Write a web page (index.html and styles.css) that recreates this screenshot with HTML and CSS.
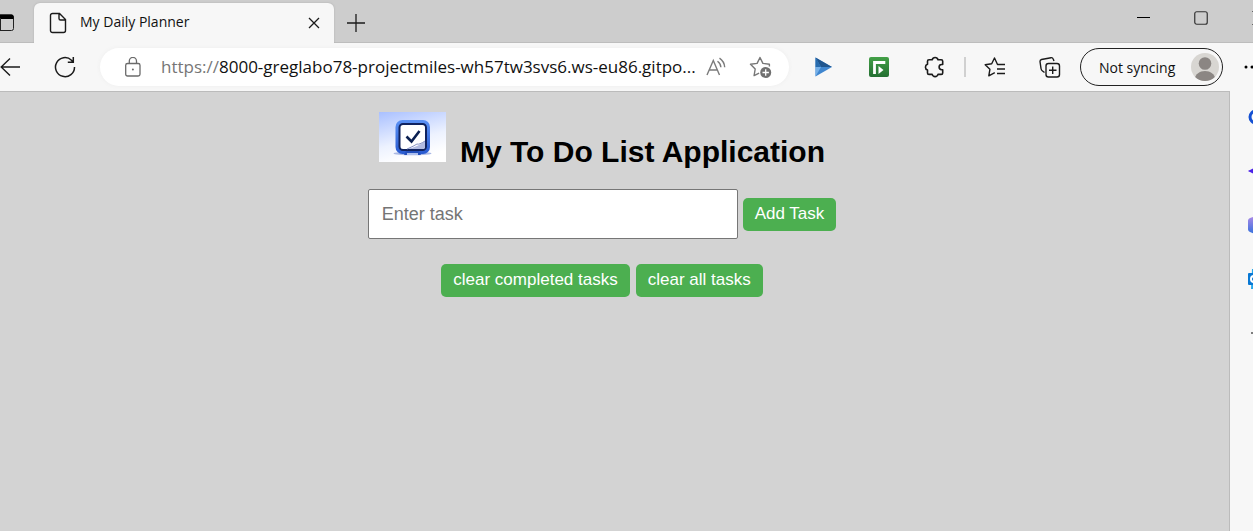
FILE: index.html
```html
<!DOCTYPE html>
<html lang="en">
<head>
<meta charset="utf-8">
<title>My Daily Planner</title>
<link rel="stylesheet" href="styles.css">
</head>
<body>
<header class="tabs">
  <button class="tab-menu" aria-label="Tab actions">
    <svg width="14" height="18" viewBox="0 0 14 18"><rect x="-3.500" y="1" width="17" height="15.500" rx="2" fill="none" stroke="#222"/><path d="M-3 .5h14.500a2 2 0 0 1 2 2V5H-3z" fill="#000"/><path d="M.5 4v12" stroke="#222"/></svg>
  </button>
  <div class="tab">
    <svg width="18" height="22" viewBox="0 0 18 22" fill="none" stroke="#1b1b1b" stroke-width="1.400"><path d="M3.500 1.500h7l6 6v11a2 2 0 0 1-2 2h-11a2 2 0 0 1-2-2v-15a2 2 0 0 1 2-2z M10 1.500v5a1.500 1.500 0 0 0 1.500 1.500h5"/></svg>
    <span class="tab-title">My Daily Planner</span>
    <button class="tab-close" aria-label="Close tab"><svg width="12" height="12" viewBox="0 0 12 12" stroke="#1b1b1b" stroke-width="1.300"><path d="M1 1l10 10M11 1L1 11"/></svg></button>
  </div>
  <button class="new-tab" aria-label="New tab"><svg width="18" height="18" viewBox="0 0 18 18" stroke="#1b1b1b" stroke-width="1.300"><path d="M9 0v18M0 9h18"/></svg></button>
  <div class="window-controls">
    <button aria-label="Minimize"><svg width="14" height="14" viewBox="0 0 14 14"><path d="M1 6.500h13" stroke="#000"/></svg></button>
    <button aria-label="Maximize"><svg width="14" height="14" viewBox="0 0 14 14"><rect x=".75" y=".75" width="12.500" height="12.500" rx="2" fill="none" stroke="#333" stroke-width="1.200"/></svg></button>
    <button aria-label="Close window"><svg width="14" height="14" viewBox="0 0 14 14"><path d="M.5 .5l13 13M13.500 .5l-13 13" stroke="#000"/></svg></button>
  </div>
</header>

<nav class="toolbar">
  <button class="icon back" aria-label="Back"><svg width="22" height="20" viewBox="0 0 22 20" fill="none" stroke="#1b1b1b" stroke-width="1.400"><path d="M20 10H1M10 1.500L1.200 10l8.800 8.500"/></svg></button>
  <button class="icon reload" aria-label="Refresh"><svg width="22" height="22" viewBox="0 0 22 22" fill="none" stroke="#1b1b1b" stroke-width="1.500"><path d="M20.500 11A9.500 9.500 0 1 1 17.500 4.200L19 6M19.300 1v5.300h-5.500"/></svg></button>
  <div class="address">
    <svg class="lock" width="16" height="20" viewBox="0 0 16 20" fill="none" stroke="#6b6b6b" stroke-width="1.300"><rect x=".7" y="6.500" width="14.300" height="12.500" rx="1.800"/><path d="M4.300 6.500V4a3.600 3.600 0 0 1 7.200 0v2.500"/><circle cx="7.900" cy="12.600" r="1" fill="#6b6b6b" stroke="none"/></svg>
    <label class="scheme" for="url">https://</label>
    <input class="url" id="url" type="text" value="8000-greglabo78-projectmiles-wh57tw3svs6.ws-eu86.gitpo...">
    <button class="icon" aria-label="Read aloud"><svg width="22" height="20" viewBox="0 0 22 20" fill="none" stroke="#7b7b7b" stroke-width="1.400"><path d="M1 18L7.300 3.500 13.500 18M3.300 13h8M11.500 4.200a8 8 0 0 1 3.400 6M13.500 1.200a12 12 0 0 1 5.200 9"/></svg></button>
    <button class="icon" aria-label="Add to favorites"><svg width="24" height="24" viewBox="0 0 24 24"><path d="M20.400 11.500v-2.200l-6.500-.9L11 2.500 8.100 8.400l-6.600.9L6.200 14l-1.100 6.600 5-2.500" fill="none" stroke="#777" stroke-width="1.400" stroke-linejoin="round"/><circle cx="16.700" cy="17.500" r="5.500" fill="#707070"/><path d="M16.700 14.300v6.400M13.500 17.500h6.400" stroke="#fff" stroke-width="1.300"/></svg></button>
  </div>
  <div class="extensions">
    <button class="icon" aria-label="Video extension"><svg width="24" height="24" viewBox="0 0 24 24"><path d="M4.500 2.500L21 12 4.500 21.500z" fill="#3f86cf"/><path d="M4.500 2.500L21 12H10z" fill="#1f558e"/><path d="M4.500 2.500L10 12H4.500z" fill="#286cae"/><path d="M4.500 12H10l-5.500 9.500z" fill="#76b0e8"/></svg></button>
    <button class="icon" aria-label="Recorder extension"><svg width="24" height="24" viewBox="0 0 24 24"><defs><linearGradient id="green" x2="0" y2="1"><stop stop-color="#43a047"/><stop offset="1" stop-color="#246f32"/></linearGradient></defs><rect x="2" y="2" width="20" height="20" rx="2" fill="url(#green)"/><path d="M7.500 19V7.500h10.800" fill="none" stroke="#fff" stroke-width="2.800"/><path d="M11.500 11l5 4-5 4z" fill="#fff"/></svg></button>
    <button class="icon" aria-label="Extensions"><svg width="24" height="24" viewBox="0 0 24 24" fill="none" stroke="#1b1b1b" stroke-width="1.600" stroke-linejoin="round"><path d="M6 4.800h3.200a3 3 0 0 1 5.800 0h3.200a1.500 1.500 0 0 1 1.500 1.500v3.200h-1a2.600 2.600 0 0 0 0 5.200h1v3.200a1.500 1.500 0 0 1-1.500 1.500H15a3 3 0 0 1-5.800 0H6a1.500 1.500 0 0 1-1.500-1.500V15a3 3 0 0 1 0-5.700v-3A1.500 1.500 0 0 1 6 4.800z"/></svg></button>
  </div>
  <span class="divider"></span>
  <button class="icon" aria-label="Favorites"><svg width="24" height="24" viewBox="0 0 24 24" fill="none" stroke="#1b1b1b" stroke-width="1.400" stroke-linejoin="round"><path d="M22 9.500h-7.500L11.500 3 8.700 8.700l-6.500 1 4.700 4.600-1.100 6.600 6-3.200M14 14h8M14 18.500h8"/></svg></button>
  <button class="icon collections" aria-label="Collections"><svg width="24" height="24" viewBox="0 0 24 24" fill="none" stroke="#1b1b1b" stroke-width="1.400"><rect x="8" y="8.500" width="13.500" height="13.500" rx="2.500"/><path d="M14.700 11.500v7.500M11 15.200h7.500M6.500 17.500l-2-1.500a4 4 0 0 1-1.500-2.500L2 6.500a2 2 0 0 1 1.500-2L13 2.700a2 2 0 0 1 2.200 1.300L16 6"/></svg></button>
  <button class="profile">Not syncing
    <svg width="28" height="28" viewBox="0 0 28 28"><defs><clipPath id="face"><circle cx="14" cy="14" r="14"/></clipPath></defs><g clip-path="url(#face)"><rect width="28" height="28" fill="#d8d6d2"/><circle cx="14" cy="10.500" r="6.300" fill="#8b8683"/><path d="M3.500 26c1-5 5-8 10.500-8s9.500 3 10.500 8q-10.500 5-21 0" fill="#8b8683"/></g></svg>
  </button>
  <button class="more" aria-label="Settings and more"><svg width="20" height="4" viewBox="0 0 20 4"><circle cx="2" cy="2" r="1.500"/><circle cx="8" cy="2" r="1.500"/><circle cx="14" cy="2" r="1.500"/></svg></button>
</nav>

<div class="workspace">
  <main class="page">
    <h1 class="title">
      <svg class="logo" width="67" height="50" viewBox="0 0 67 50"><defs><linearGradient id="sky" x2=".35" y2="1"><stop stop-color="#a9c0ff"/><stop offset=".65" stop-color="#edf2ff"/><stop offset="1" stop-color="#fff"/></linearGradient><linearGradient id="frame" x2="0" y2="1"><stop stop-color="#5b92f5"/><stop offset="1" stop-color="#285ad0"/></linearGradient></defs><rect width="67" height="50" fill="url(#sky)"/><ellipse cx="33.500" cy="41.500" rx="19" ry="1.700" fill="#aab8e4"/><rect x="16.500" y="8" width="34.500" height="34" rx="7" fill="url(#frame)"/><path d="M27 39h13l2 4H25z" fill="#2450bd"/><path d="M28 42h11" stroke="#dce6ff" stroke-width="1.500"/><rect x="20.500" y="12" width="26.500" height="26" rx="3.500" fill="#fff" stroke="#10235f" stroke-width="2"/><path d="M28 37q11-2 18-8v5.500a2.500 2.500 0 0 1-2.500 2.500z" fill="#b2bce2"/><path d="M28 37q7-3 10-5 2 1 8-3" fill="none" stroke="#8793c5"/><path d="M27.500 24.500l5 5L40.500 19" fill="none" stroke="#0b2051" stroke-width="2.600"/></svg>
      <span>My To Do List Application</span>
    </h1>
    <form class="entry">
      <input class="task" type="text" placeholder="Enter task" aria-label="Enter task">
      <button class="action" type="button">Add Task</button>
    </form>
    <div class="clear">
      <button class="action" type="button">clear completed tasks</button>
      <button class="action" type="button">clear all tasks</button>
    </div>
  </main>
  <aside class="sidebar">
    <button aria-label="Search"><svg width="20" height="20" viewBox="0 0 20 20" fill="none" stroke="#1450d2" stroke-width="3"><circle cx="8" cy="10" r="6"/><path d="M12 14l6 5"/></svg></button>
    <button aria-label="Discover"><svg width="20" height="20" viewBox="0 0 20 20"><path d="M0 10q8-1 10-10 2 9 10 10-8 1-10 10-2-9-10-10" fill="#4b22e8"/><path d="M0 10l6-3v6z" fill="#4b22e8"/></svg></button>
    <button aria-label="Office"><svg width="20" height="20" viewBox="0 0 20 20"><defs><linearGradient id="office" x2="0" y2="1"><stop stop-color="#b58be8"/><stop offset="1" stop-color="#2d6fdc"/></linearGradient></defs><path d="M10 0l9 5v10l-9 5-8-3a3 3 0 0 1-2-3V6a3 3 0 0 1 2-3z" fill="url(#office)"/></svg></button>
    <button aria-label="Outlook"><svg width="20" height="20" viewBox="0 0 20 20"><path d="M4 0h16v20H3z" fill="#28a8ea"/><rect y="4" width="13" height="12" rx="1" fill="#0878d4"/><circle cx="6" cy="10" r="3" fill="none" stroke="#fff" stroke-width="2"/></svg></button>
    <button aria-label="Add"><svg width="20" height="20" viewBox="0 0 20 20"><path d="M3 10h16M11 2v16" stroke="#555" stroke-width="1.500"/></svg></button>
  </aside>
</div>
</body>
</html>
```

FILE: styles.css
```css
* { box-sizing: border-box; }

body {
  margin: 0;
  min-height: 100vh;
  display: flex;
  flex-direction: column;
  overflow: hidden;
  background: #f7f7f7;
  color: #111;
  font-family: "Open Sans", "Noto Sans", sans-serif;
}

button {
  margin: 0;
  padding: 0;
  border: 0;
  background: none;
  color: inherit;
  font: inherit;
  flex-shrink: 0;
}

svg { display: block; flex-shrink: 0; }

.tabs {
  display: flex;
  height: 43px;
  background: #cdcdcd;
  border-bottom: 1px solid #bdbdbd;
}

.tab-menu { width: 34px; padding-top: 3px; }

.tab {
  display: flex;
  align-items: center;
  width: 300px;
  height: 40px;
  margin-top: 3px;
  padding: 0 14px 0 15px;
  border-radius: 6px 6px 0 0;
  background: #f7f7f7;
  box-shadow: 0 0 2px #aaa;
  clip-path: inset(-3px -3px 0 -3px);
}

.tab-title {
  flex: 1;
  margin-left: 13px;
  font-size: 14px;
  line-height: 20px;
  padding-bottom: 2px;
}

.new-tab { margin-left: 13px; padding-top: 3px; }

.window-controls {
  display: flex;
  gap: 44px;
  height: 36px;
  margin-left: auto;
  margin-right: -13px;
}

.toolbar {
  display: flex;
  align-items: center;
  height: 48px;
}

.icon {
  display: grid;
  place-items: center;
  width: 24px;
  height: 24px;
}

.back { width: 21px; }
.reload { margin-left: 32px; }

.address {
  display: flex;
  flex: 1;
  align-items: center;
  min-width: 0;
  height: 38px;
  margin-left: 23px;
  padding-right: 16px;
  border-radius: 19px;
  background: #fff;
  box-shadow: 0 0 4px #eee;
}

.lock { margin: 0 20px 0 25px; }

.scheme, .url { font-size: 17px; line-height: 24px; }
.scheme { color: #767676; }

.url {
  flex: 1;
  min-width: 0;
  padding: 0;
  border: 0;
  background: none;
  color: #111;
  font-family: inherit;
}

.address .icon { margin-left: 20px; }
.address .url + .icon { margin-left: 6px; }

.extensions {
  display: flex;
  gap: 32px;
  margin: 0 17px 0 22px;
}

.divider {
  width: 2px;
  height: 20px;
  margin-right: 17px;
  background: #d0d0d0;
}

.collections { margin-left: 31px; }

.profile {
  display: flex;
  align-items: center;
  justify-content: space-between;
  width: 143px;
  height: 38px;
  margin-left: 18px;
  padding: 0 3px 0 18px;
  border: 1px solid #222;
  border-radius: 19px;
  font-size: 14px;
}

.more {
  width: 9px;
  margin-left: 21px;
  overflow: hidden;
}

.workspace { display: flex; flex: 1; }

.page {
  flex: 1;
  padding: 20px 25px 0 0;
  border: solid #bbb;
  border-width: 1px 1px 0 0;
  background: #d3d3d3;
  color: #000;
  font-family: "Liberation Sans", Arial, sans-serif;
  text-align: center;
}

.title {
  display: flex;
  align-items: baseline;
  justify-content: center;
  gap: 14px;
  margin: 0;
  font-size: 30px;
  line-height: 36px;
}

.entry {
  display: flex;
  align-items: center;
  justify-content: center;
  gap: 5px;
  margin-top: 19px;
}

.task {
  width: 370px;
  height: 50px;
  padding: 0 13px;
  border: 1px solid #767676;
  border-radius: 2px;
  background: #fff;
  font-family: inherit;
  font-size: 18px;
}

.task::placeholder { color: #757575; }

.action {
  height: 33px;
  padding: 0 12px;
  border-radius: 5px;
  background: #4caf50;
  color: #fff;
  font-size: 17px;
}

.clear {
  display: flex;
  justify-content: center;
  gap: 6px;
  margin-top: 25px;
}

.clear .action { padding-bottom: 2px; }

.sidebar {
  display: flex;
  flex-direction: column;
  gap: 34px;
  width: 23px;
  padding: 16px 0 0 18px;
  overflow: hidden;
}

.sidebar button { width: 20px; }
```
